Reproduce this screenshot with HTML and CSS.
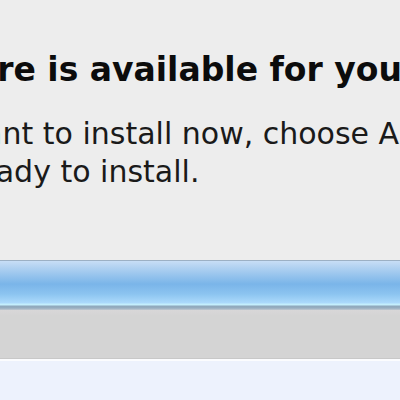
FILE: index.html
```html
<!DOCTYPE html>
<html lang="en">
<head>
<meta charset="utf-8">
<title>Software Update</title>
<link rel="stylesheet" href="styles.css">
</head>
<body>
<div class="window">
  <div class="message">
    <h1 class="title">New software is available for your computer.</h1>
    <p class="info"><span class="line">If you don't want to install now, choose Apple menu &gt; Software Update</span><span class="line line-wrap">when you're ready to install.</span></p>
  </div>
  <div class="progress"></div>
  <div class="toolbar"></div>
  <div class="list"></div>
</div>
</body>
</html>
```

FILE: styles.css
```css
html, body {
  margin: 0;
  padding: 0;
  background: #ededed;
}

.window {
  width: 400px;
  height: 400px;
  overflow: hidden;
  display: flex;
  flex-direction: column;
  background: #ededed;
  font-family: "DejaVu Sans", "Liberation Sans", sans-serif;
  color: #111;
}

.message {
  margin-left: -220px;
  padding-top: 50px;
  white-space: nowrap;
}

.title {
  margin: 0;
  font-size: 33px;
  line-height: 40px;
  font-weight: bold;
  color: #0c0c0c;
}

.info {
  margin: 25px 0 0;
  font-size: 30px;
  line-height: 38px;
  color: #1a1a1a;
}

.line {
  display: block;
}

.line-wrap {
  margin-left: -8px;
}

.progress {
  margin-top: 69px;
  height: 50px;
  flex: none;
  background: linear-gradient(to bottom,
    #9cb0c4 0, #9cb0c4 1px,
    #c8def6 1px, #b6d4f2 6px,
    #7ab5e9 24px, #8cc4f0 34px,
    #acdafb 43px, #c4eefc 44px, #c4eefc 45px,
    #8fa8bc 46px, #97adbf 48px, #c2c9d0 50px);
}

.toolbar {
  height: 48px;
  flex: none;
  background: linear-gradient(to bottom, #d8d7d8 0, #d4d4d4 6px, #d4d4d4 100%);
  border-bottom: 1px solid #c8c8c8;
}

.list {
  flex: 1;
  background: #edf2fd;
  border-top: 2px solid #fbfcfe;
}
```
